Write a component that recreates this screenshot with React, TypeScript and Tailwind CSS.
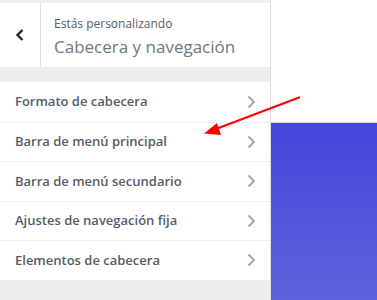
import React from "react";

const items = [
  "Formato de cabecera",
  "Barra de menú principal",
  "Barra de menú secundario",
  "Ajustes de navegación fija",
  "Elementos de cabecera",
];

function Chevron({ className = "" }: { className?: string }) {
  return (
    <svg width="10" height="14" viewBox="0 0 10 14" className={className}>
      <path d="M2.5 1.5 L8 7 L2.5 12.5" fill="none" stroke="currentColor" strokeWidth="1.8" />
    </svg>
  );
}

export default function App() {
  return (
    <div className="relative flex h-[300px] w-[377px] overflow-hidden bg-white" style={{ fontFamily: '"Open Sans", sans-serif' }}>
      {/* panel lateral */}
      <div className="flex w-[271px] shrink-0 flex-col border-r border-[#dddddd] bg-[#eeeeee]">
        <div className="mt-[3px] flex h-[64px] bg-white">
          <button className="flex w-[41px] shrink-0 items-center justify-center border-r border-[#dddddd] text-[#23282d]">
            <svg width="10" height="14" viewBox="0 0 10 14">
              <path d="M7.5 2 L2.5 7 L7.5 12" fill="none" stroke="currentColor" strokeWidth="2.4" />
            </svg>
          </button>
          <div className="flex flex-col justify-center pl-[13px] pt-[3px]">
            <span className="text-[12px] leading-[16px] text-[#555d66]">Estás personalizando</span>
            <span className="mt-[4px] text-[17px] leading-[22px] text-[#72777c]">Cabecera y navegación</span>
          </div>
        </div>

        <ul className="mt-[15px] bg-white">
          {items.map((label, i) => (
            <li
              key={label}
              className={
                "flex h-[39.5px] items-center justify-between pl-[15px] pr-[14px] " +
                (i > 0 ? "border-t border-[#eeeeee]" : "")
              }
            >
              <span className="text-[13px] font-semibold text-[#555d66]">{label}</span>
              <Chevron className="text-[#a0a5aa]" />
            </li>
          ))}
        </ul>
      </div>

      {/* vista previa */}
      <div className="flex flex-1 flex-col">
        <div className="h-[122px] bg-white" />
        <div className="flex-1 border-t border-[#dddddd] bg-gradient-to-b from-[#4644dc] to-[#5d63dc]" />
      </div>

      {/* flecha indicadora */}
      <svg className="absolute left-0 top-0" width="377" height="300" viewBox="0 0 377 300">
        <line x1="299" y1="97.5" x2="216" y2="129" stroke="#ff0000" strokeWidth="2.2" strokeLinecap="round" />
        <polygon points="204,133.5 217,123 221,135" fill="#ff0000" />
      </svg>
    </div>
  );
}
